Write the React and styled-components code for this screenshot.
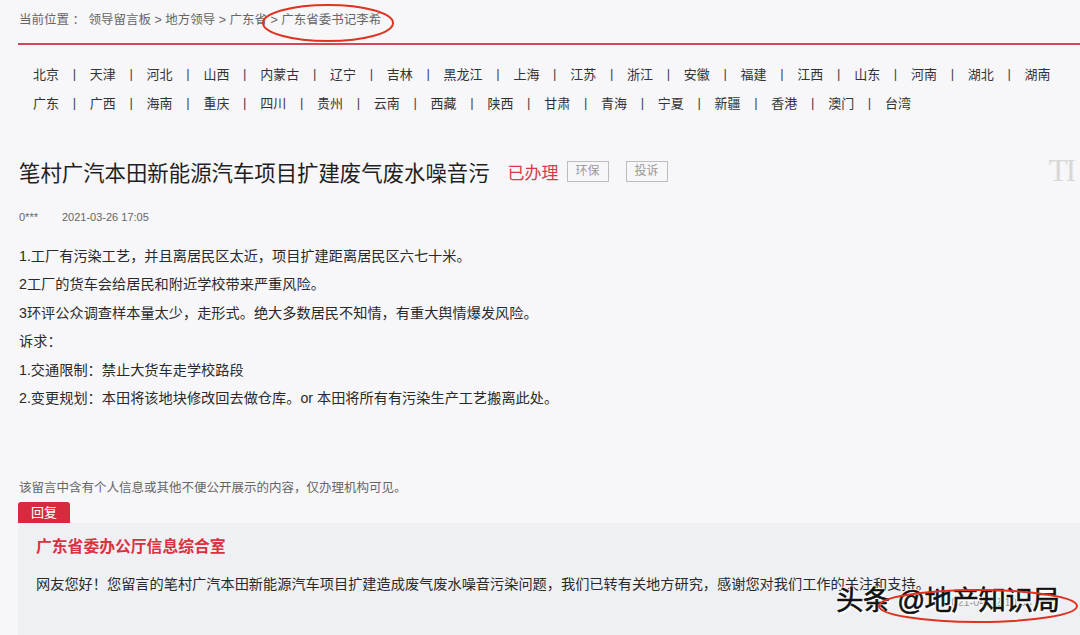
import React from "react";
import styled, { createGlobalStyle } from "styled-components";

const provincesA = ["北京","天津","河北","山西","内蒙古","辽宁","吉林","黑龙江","上海","江苏","浙江","安徽","福建","江西","山东","河南","湖北","湖南"];
const provincesB = ["广东","广西","海南","重庆","四川","贵州","云南","西藏","陕西","甘肃","青海","宁夏","新疆","香港","澳门","台湾"];

const body = [
  "1.工厂有污染工艺，并且离居民区太近，项目扩建距离居民区六七十米。",
  "2工厂的货车会给居民和附近学校带来严重风险。",
  "3环评公众调查样本量太少，走形式。绝大多数居民不知情，有重大舆情爆发风险。",
  "诉求：",
  "1.交通限制：禁止大货车走学校路段",
  "2.变更规划：本田将该地块修改回去做仓库。or 本田将所有有污染生产工艺搬离此处。",
];

const GlobalStyle = createGlobalStyle`
  html, body {
    margin: 0;
    padding: 0;
    background: #f7f6f9;
    overflow: hidden;
  }
  body {
    font-family: "Liberation Sans", "Noto Sans CJK SC", sans-serif;
    color: #333;
  }
`;

export default function App() {
  return (
    <>
      <GlobalStyle />
      <Page>
        <Crumbs>当前位置 ： 领导留言板 &gt; 地方领导 &gt; 广东省 &gt; 广东省委书记李希</Crumbs>
        <RedRule />
        <Nav>
          {[provincesA, provincesB].map((row, i) => (
            <NavRow key={i}>
              {row.map((p, j) => (
                <React.Fragment key={p}>
                  {j > 0 && <Sep>|</Sep>}
                  <NavLink>{p}</NavLink>
                </React.Fragment>
              ))}
            </NavRow>
          ))}
        </Nav>

        <TitleRow>
          <Title>笔村广汽本田新能源汽车项目扩建废气废水噪音污</Title>
          <Status>已办理</Status>
          <Tag>环保</Tag>
          <Tag>投诉</Tag>
          <FontTool>TI</FontTool>
        </TitleRow>

        <Meta>
          <span>0***</span>
          <span>2021-03-26 17:05</span>
        </Meta>

        <Content>
          {body.map((l) => (
            <p key={l}>{l}</p>
          ))}
        </Content>

        <Notice>该留言中含有个人信息或其他不便公开展示的内容，仅办理机构可见。</Notice>
        <ReplyTab>回复</ReplyTab>
        <ReplyBox>
          <ReplyOrg>广东省委办公厅信息综合室</ReplyOrg>
          <ReplyText>网友您好！您留言的笔村广汽本田新能源汽车项目扩建造成废气废水噪音污染问题，我们已转有关地方研究，感谢您对我们工作的关注和支持。</ReplyText>
          <ReplyDate>2021-04-12 10:36</ReplyDate>
        </ReplyBox>

        <Watermark>头条 @地产知识局</Watermark>
        <Ring width="136" height="42" viewBox="0 0 136 42" $left={260} $top={2}>
          <ellipse cx="68" cy="21" rx="65" ry="18" />
        </Ring>
        <Ring width="204" height="40" viewBox="0 0 204 40" $left={876} $top={586}>
          <ellipse cx="102" cy="20" rx="99" ry="16" />
        </Ring>
      </Page>
    </>
  );
}

const Page = styled.div`
  position: relative;
  width: 1080px;
  height: 635px;
  overflow: hidden;
  padding-left: 18px;
  box-sizing: border-box;
`;

const Crumbs = styled.div`
  padding: 10px 0 0 1px;
  line-height: 20px;
  font-size: 12.5px;
  color: #666;
`;

const RedRule = styled.div`
  margin-top: 13px;
  height: 2px;
  background: #d3465c;
`;

const Nav = styled.div`
  padding: 14px 0 0 15px;
`;

const NavRow = styled.div`
  display: flex;
  align-items: center;
  height: 29px;
  font-size: 13px;
  color: #333;
`;

const NavLink = styled.span`
  white-space: nowrap;
`;

const Sep = styled.span`
  margin: 0 13.4px;
  width: 4px;
  text-align: center;
  color: #444;
`;

const TitleRow = styled.div`
  display: flex;
  align-items: center;
  margin-top: 39px;
  height: 30px;
`;

const Title = styled.h1`
  margin: 0 0 0 1px;
  font-size: 21.4px;
  font-weight: normal;
  color: #1f1f1f;
  white-space: nowrap;
`;

const Status = styled.span`
  margin-left: 18px;
  font-size: 17px;
  color: #d63a4a;
`;

const Tag = styled.span`
  margin-left: 8px;
  margin-right: 9px;
  width: 40px;
  height: 19px;
  border: 1px solid #bdbdbd;
  font-size: 12px;
  line-height: 19px;
  text-align: center;
  color: #999;
`;

const FontTool = styled.span`
  margin-left: auto;
  margin-right: 6px;
  font-family: "Liberation Serif", serif;
  font-size: 31px;
  color: #d8d8d8;
  letter-spacing: -2px;
`;

const Meta = styled.div`
  display: flex;
  gap: 24px;
  margin-top: 21px;
  padding-left: 1px;
  line-height: 20px;
  font-size: 11px;
  color: #666;
`;

const Content = styled.div`
  margin-top: 15px;
  padding-left: 1px;
  font-size: 14.2px;
  color: #2a2a2a;
  p {
    margin: 0;
    line-height: 28.4px;
  }
`;

const Notice = styled.div`
  margin-top: 67px;
  padding-left: 1px;
  line-height: 18px;
  font-size: 12.5px;
  color: #666;
`;

const ReplyTab = styled.div`
  margin-top: 5px;
  width: 52px;
  height: 21px;
  border-radius: 3px 3px 0 0;
  background: #d82a3f;
  color: #fff;
  font-size: 13px;
  line-height: 21px;
  text-align: center;
`;

const ReplyBox = styled.div`
  background: #eef0f4;
  padding: 14px 0 30px 18px;
`;

const ReplyOrg = styled.div`
  line-height: 20px;
  font-size: 15.8px;
  font-weight: bold;
  color: #d9323f;
`;

const ReplyText = styled.div`
  margin-top: 17px;
  line-height: 20px;
  font-size: 14.2px;
  color: #2a2a2a;
  white-space: nowrap;
`;

const ReplyDate = styled.div`
  margin-top: 2px;
  padding-right: 48px;
  text-align: right;
  font-size: 11px;
  color: #999;
`;

const Watermark = styled.div`
  position: absolute;
  left: 836px;
  top: 585px;
  font-size: 27.5px;
  line-height: 32px;
  color: #111;
  letter-spacing: -0.5px;
  -webkit-text-stroke: 0.6px #111;
  text-shadow: 1px 1px 0 #fff, -1px -1px 0 #fff, 1px -1px 0 #fff, -1px 1px 0 #fff, 2px 2px 1px #fff;
`;

const Ring = styled.svg`
  position: absolute;
  left: ${(p) => p.$left}px;
  top: ${(p) => p.$top}px;
  fill: none;
  stroke: #e0321f;
  stroke-width: 2;
`;
